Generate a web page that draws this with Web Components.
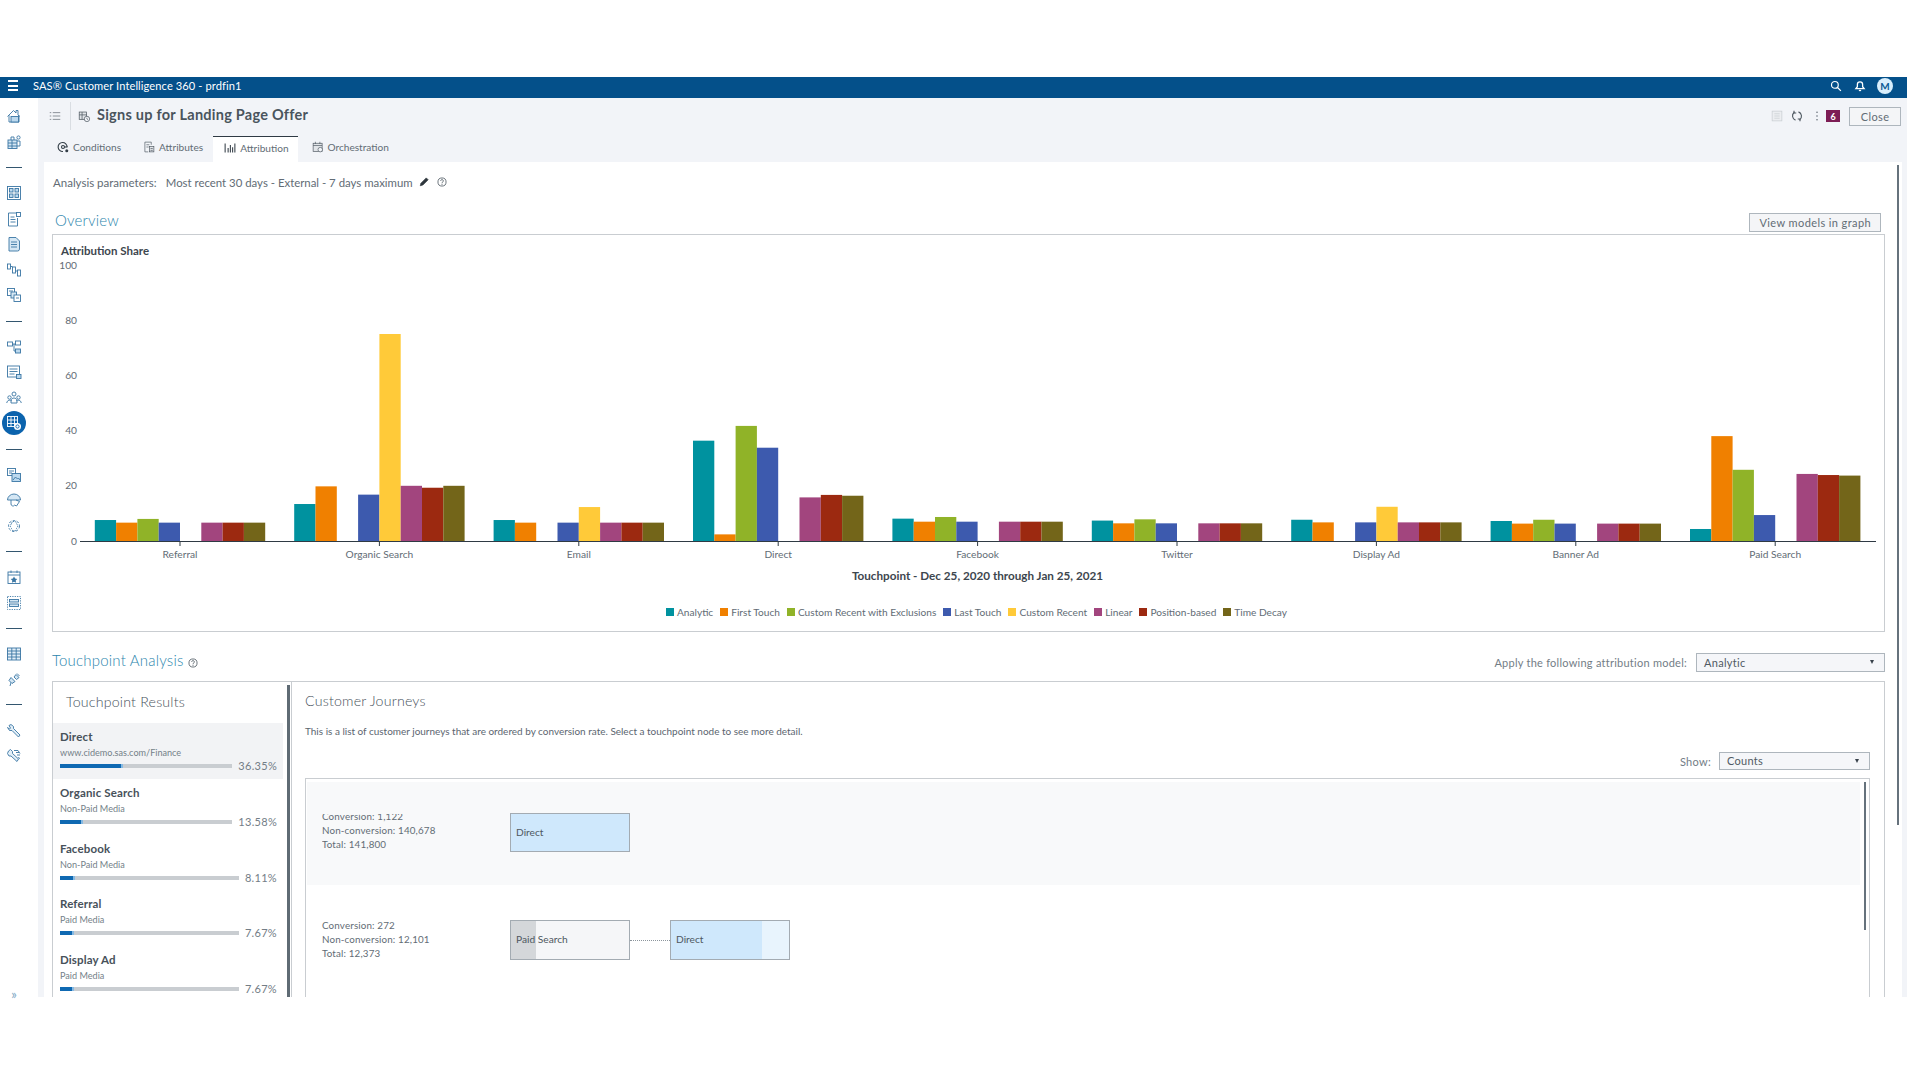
<!DOCTYPE html>
<html lang="en">
<head>
<meta charset="UTF-8">
<title>Signs up for Landing Page Offer</title>
<style>
  html, body { margin: 0; padding: 0; background: #fff; }
  body { font-family: Lato, "Open Sans", sans-serif; color: #4b5660; }
</style>
</head>
<body>

<template id="t-app">
  <style>
    :host { display: flex; flex-direction: column; width: 1907px; height: 1073px; overflow: hidden; background: #fff; }
    .top { height: 77px; flex: none; }
    .main { height: 899px; flex: none; display: flex; }
    .work { flex: 1; min-width: 0; display: flex; flex-direction: column; background: #f2f4f8; }
    .content { flex: 1; min-height: 0; margin: 0 5px 0 6px; background: #fff; position: relative; overflow: hidden; display: flex; flex-direction: column; }
    .scroll { position: absolute; left: 1853px; top: 3px; width: 2px; height: 660px; background: #66727c; }
    .params { height: 40px; flex: none; display: flex; align-items: center; padding-left: 9px; font-size: 11.5px; color: #626c75; }
    .params b { font-weight: 400; font-size: 11.4px; margin-left: 9px; }
    .params sas-icon { margin-left: 5px; }
    .params sas-icon + sas-icon { margin-left: 7px; }
    .overview { height: 32px; flex: none; display: flex; justify-content: space-between; align-items: flex-end; padding: 0 21px 2px 11px; box-sizing: border-box; }
    h2 { margin: 0; font-size: 15px; line-height: 20px; font-weight: 300; color: #2c86ad; letter-spacing: .2px; }
    .overview h2 { margin-bottom: 2px; }
    .tphead { height: 49px; flex: none; display: flex; align-items: flex-end; padding: 0 17px 9px 8px; box-sizing: border-box; }
    .tphead h2 { margin-bottom: 2px; }
    .tphead sas-icon { margin: 0 auto 4px 4px; }
    .tphead span { font-size: 11px; color: #737d86; letter-spacing: .25px; margin-right: 9px; line-height: 19px; }
  </style>
  <div class="top"></div>
  <sas-appbar></sas-appbar>
  <div class="main">
    <sas-sidebar></sas-sidebar>
    <div class="work">
      <sas-objheader></sas-objheader>
      <div class="content">
        <div class="scroll"></div>
        <div class="params">Analysis parameters:<b>Most recent 30 days - External - 7 days maximum</b><sas-icon name="pencil" size="12"></sas-icon><sas-icon name="help" size="10"></sas-icon></div>
        <div class="overview"><h2>Overview</h2><sas-button>View models in graph</sas-button></div>
        <sas-chart></sas-chart>
        <div class="tphead"><h2>Touchpoint Analysis</h2><sas-icon name="help" size="10"></sas-icon><span>Apply the following attribution model:</span><sas-select style="width:189px">Analytic</sas-select></div>
        <sas-analysis></sas-analysis>
      </div>
    </div>
  </div>
</template>

<template id="t-appbar">
  <style>
    :host { display: flex; align-items: center; height: 21px; flex: none; background: #04508a; color: #fff; font-size: 11.1px; letter-spacing: .1px; padding-bottom: 4px; box-sizing: border-box; }
    .burger { width: 10px; height: 7px; margin: 0 15px 0 8px; border-top: 2px solid #fff; border-bottom: 2px solid #fff; position: relative; }
    .burger::after { content: ""; position: absolute; left: 0; right: 0; top: 2.5px; height: 2px; background: #fff; }
    .title { flex: 1; }
    sas-icon { margin-right: 12px; }
    sas-icon + sas-icon { margin-right: 9px; }
    .av { width: 16px; height: 16px; border-radius: 50%; background: #d8eefc; color: #0b5a94; font-size: 10px; font-weight: 700; display: flex; align-items: center; justify-content: center; margin: 0 14px 0 2px; }
  </style>
  <div class="burger"></div>
  <div class="title">SAS® Customer Intelligence 360 - prdfin1</div>
  <sas-icon name="search" size="12"></sas-icon>
  <sas-icon name="bell" size="12"></sas-icon>
  <div class="av">M</div>
</template>

<template id="t-sidebar">
  <style>
    :host { display: flex; flex-direction: column; width: 38px; flex: none; background: #fff; padding-top: 5.5px; box-sizing: border-box; }
    .i { height: 25.6px; width: 28px; display: flex; align-items: center; justify-content: center; flex: none; }
    .d { height: 25.6px; width: 28px; display: flex; align-items: center; justify-content: center; flex: none; }
    .d::before { content: ""; width: 16px; height: 1px; background: #33566f; }
    .a { background: #0b63ad; width: 24px; height: 24px; border-radius: 50%; display: flex; align-items: center; justify-content: center; }
    .more { margin-top: auto; font-size: 13px; line-height: 6px; width: 28px; text-align: center; color: #7ea7c4; }
  </style>
  <div id="list" style="display:contents"></div>
  <div class="more">»</div>
</template>

<template id="t-objheader">
  <style>
    :host { display: block; height: 64px; flex: none; }
    .row { height: 36px; display: flex; align-items: center; padding-left: 11px; box-sizing: border-box; margin-bottom: 2px; }
    .sep { width: 1px; height: 28px; background: #d9dde2; margin: 0 7px 0 9px; }
    .name { font-size: 14.5px; font-weight: 700; color: #4a545d; letter-spacing: .25px; margin: 0 0 4px 6px; flex: 1; }
    .row sas-icon { margin-right: 8px; }
    .badge { width: 14px; height: 12px; background: #7d1d55; color: #fff; font-size: 9px; font-weight: 700; display: flex; align-items: center; justify-content: center; margin-right: 9px; }
    .tabs { display: flex; height: 26px; padding-left: 8px; }
    sas-button { margin-right: 6px; }
  </style>
  <div class="row">
    <sas-icon name="lines" size="12" style="margin-right:0"></sas-icon>
    <div class="sep"></div>
    <sas-icon name="task" size="13" style="margin-right:0"></sas-icon>
    <div class="name">Signs up for Landing Page Offer</div>
    <sas-icon name="sheet" size="12"></sas-icon>
    <sas-icon name="sync" size="12"></sas-icon>
    <sas-icon name="kebab" size="12" style="margin-right:3px"></sas-icon>
    <div class="badge">6</div>
    <sas-button style="padding:0 10.5px">Close</sas-button>
  </div>
  <div class="tabs">
    <sas-tab icon="cond">Conditions</sas-tab>
    <sas-tab icon="attr" style="padding-right:10px">Attributes</sas-tab>
    <sas-tab icon="bars" active>Attribution</sas-tab>
    <sas-tab icon="cal" style="margin-left:3px">Orchestration</sas-tab>
  </div>
</template>

<template id="t-tab">
  <style>
    :host { display: flex; align-items: center; padding: 0 11px 4px; gap: 4px; font-size: 10.1px; color: #626c75; box-sizing: border-box; }
    :host([active]) { background: #fff; border-top: 1px solid #2f3a44; padding: 0 9px 4px 11px; }
  </style>
  <span id="ic" style="display:contents"></span><slot></slot>
</template>

<template id="t-button">
  <style>
    :host { display: flex; align-items: center; justify-content: center; height: 19px; padding: 0 9px; border: 1px solid #aeb6bd; background: #f4f5f7; box-sizing: border-box; font-size: 11px; color: #626c75; letter-spacing: .4px; }
  </style>
  <slot></slot>
</template>

<template id="t-select">
  <style>
    :host { display: flex; align-items: center; justify-content: space-between; height: 19px; padding: 0 10px 1px 7px; border: 1px solid #aeb6bd; background: #f5f6f9; box-sizing: border-box; font-size: 11px; color: #505a63; letter-spacing: .3px; }
    i { width: 0; height: 0; border: 2.5px solid transparent; border-top: 4px solid #38424b; border-bottom: 0; }
  </style>
  <slot></slot><i></i>
</template>

<template id="t-chart">
  <style>
    :host { display: block; width: 1833px; height: 398px; flex: none; margin-left: 8px; border: 1px solid #c9cdd1; box-sizing: border-box; overflow: hidden; }
    .head { font-size: 11.5px; line-height: 15px; padding: 8px 0 0 8px; font-weight: 700; color: #3d464e; height: 16px; }
    svg { display: block; font-family: Lato, sans-serif; }
    text { font-size: 10.2px; fill: #626c75; }
    .axis { font-size: 11.7px; line-height: 18px; height: 18px; font-weight: 700; color: #3d464e; text-align: center; }
    .legend { display: flex; gap: 7px; margin: 20px 0 0 613px; font-size: 10.15px; color: #626c75; line-height: 16px; }
    .legend span { display: flex; align-items: center; gap: 3px; white-space: nowrap; }
    .legend i { width: 8px; height: 8px; flex: none; }
  </style>
  <div class="head">Attribution Share</div>
  <svg id="plot" width="1831" height="307" viewBox="0 0 1831 307"></svg>
  <div class="axis" style="width:1849px">Touchpoint - Dec 25, 2020 through Jan 25, 2021</div>
  <div class="legend" id="legend"></div>
</template>

<template id="t-analysis">
  <style>
    :host { flex: 1; min-height: 0; display: flex; width: 1833px; margin-left: 8px; border-top: 1px solid #c9cdd1; box-sizing: border-box; }
    .left { width: 239px; flex: none; border-left: 1px solid #c9cdd1; box-sizing: border-box; position: relative; overflow: hidden; }
    .left::after { content: ""; position: absolute; left: 234px; top: 3px; bottom: 0; width: 3px; background: #5f6b74; }
    h3 { margin: 0; font-size: 14.2px; font-weight: 300; color: #48525b; letter-spacing: .2px; line-height: 20px; }
    .left h3 { padding: 10px 0 0 13px; height: 31px; }
    .right { flex: 1; min-width: 0; display: flex; flex-direction: column; border-left: 1px solid #c9cdd1; border-right: 1px solid #c9cdd1; padding: 9px 14px 0 13px; }
    p { margin: 13px 0 0; font-size: 9.97px; line-height: 14px; color: #5c6670; }
    .show { display: flex; justify-content: flex-end; align-items: center; margin-top: 14px; height: 18px; font-size: 11px; color: #737d86; letter-spacing: .3px; gap: 8px; }
    .list { flex: 1; min-height: 0; margin-top: 8px; padding: 3px 9px 0 1px; border: 1px solid #c9cdd1; border-bottom: 0; overflow: hidden; position: relative; }
    .list::after { content: ""; position: absolute; right: 3px; top: 3px; width: 2px; height: 148px; background: #66727c; }
  </style>
  <div class="left">
    <h3>Touchpoint Results</h3>
    <sas-touchpoint selected name="Direct" sub="www.cidemo.sas.com/Finance" pct="36.35"></sas-touchpoint>
    <sas-touchpoint name="Organic Search" sub="Non-Paid Media" pct="13.58"></sas-touchpoint>
    <sas-touchpoint name="Facebook" sub="Non-Paid Media" pct="8.11"></sas-touchpoint>
    <sas-touchpoint name="Referral" sub="Paid Media" pct="7.67"></sas-touchpoint>
    <sas-touchpoint name="Display Ad" sub="Paid Media" pct="7.67"></sas-touchpoint>
  </div>
  <div class="right">
    <h3>Customer Journeys</h3>
    <p>This is a list of customer journeys that are ordered by conversion rate. Select a touchpoint node to see more detail.</p>
    <div class="show">Show:<sas-select style="width:151px;height:18px">Counts</sas-select></div>
    <div class="list">
      <sas-journey clip conv="1,122" non="140,678" total="141,800" style="height:103px;background:#f8f9fa;--up:7px">
        <sas-node style="--a:#cfe8fc;--b:#cfe8fc;--p:100%;height:39px;margin-bottom:2px">Direct</sas-node>
      </sas-journey>
      <sas-journey conv="272" non="12,101" total="12,373" style="height:110px;--up:2px">
        <sas-node style="--a:#d4d7da;--b:#f5f6f8;--p:21%">Paid Search</sas-node>
        <i style="width:40px;border-top:1px dotted #8c959c"></i>
        <sas-node style="--a:#cfe8fc;--b:#e8f4fd;--p:77%">Direct</sas-node>
      </sas-journey>
    </div>
  </div>
</template>

<template id="t-touchpoint">
  <style>
    :host { display: block; height: 55.75px; width: 230px; padding: 6px 6px 0 7px; box-sizing: border-box; }
    :host([selected]) { background: #f2f3f5; }
    .n { font-size: 11.5px; line-height: 16px; font-weight: 700; color: #47515a; letter-spacing: .15px; }
    .s { font-size: 9.1px; line-height: 14px; margin-top: 1px; color: #747f88; }
    .b { display: flex; align-items: center; height: 14px; margin-top: -1px; gap: 6px; font-size: 11px; color: #737d86; letter-spacing: .3px; }
    .b span { margin-top: -1px; }
    .t { flex: 1; height: 4px; background: #c9cdd1; }
    .f { height: 100%; background: #0f69b2; border-right: 2px solid #86b9e2; box-sizing: border-box; }
  </style>
  <div class="n"></div><div class="s"></div>
  <div class="b"><div class="t"><div class="f"></div></div><span></span></div>
</template>

<template id="t-journey">
  <style>
    :host { display: flex; align-items: center; padding-left: 15px; box-sizing: border-box; }
    .st { width: 188px; flex: none; font-size: 9.8px; line-height: 14px; color: #626c75; letter-spacing: .15px; margin-bottom: var(--up); }
    :host([clip]) .st { clip-path: inset(5px 0 0 0); }
    .nodes { display: flex; align-items: center; }
  </style>
  <div class="st"><div id="c"></div><div id="n"></div><div id="t"></div></div>
  <div class="nodes"><slot></slot></div>
</template>

<template id="t-node">
  <style>
    :host { display: flex; align-items: center; width: 120px; height: 40px; padding: 0 0 2px 5px; border: 1px solid #a3abb2; box-sizing: border-box; font-size: 10.2px; color: #4e5861; background: linear-gradient(to right, var(--a) var(--p), var(--b) var(--p)); }
  </style>
  <slot></slot>
</template>

<script>
  const ICONS = {
    home: '<path d="M1.5 8.5 7.5 2.5 10 5V2.5h2V7l1.5 1.5"/><path d="M3 7v7h10V7"/><rect x="5" y="8.5" width="7.5" height="5.5" fill="#bcd9ee"/>',
    build: '<rect x="2" y="6" width="9" height="8.5" fill="#d5e7f4"/><path d="M2 9h9M2 12h9M6 6v8.5M5 6V3h3v3"/><circle cx="12.5" cy="3.5" r="1.6"/><path d="M11 7h3v5h-3"/>',
    grid: '<rect x="1.5" y="1.5" width="13" height="13"/><rect x="3.5" y="3.5" width="3.5" height="3.5" fill="#bcd9ee"/><rect x="9" y="3.5" width="3.5" height="3.5" fill="#bcd9ee"/><rect x="3.5" y="9" width="3.5" height="3.5" fill="#bcd9ee"/><rect x="9" y="9" width="3.5" height="3.5" fill="#bcd9ee"/>',
    form: '<path d="M10 2H2.5v13h9V7"/><path d="M4.5 6h4M4.5 8.5h5M4.5 11h5"/><rect x="10.5" y="1.5" width="4" height="4"/>',
    doc: '<path d="M3 1.5h7l3.5 3.5v8a2 2 0 0 1-2 2H3z" fill="#d5e7f4"/><path d="M5 6h6M5 8.5h6M5 11h6"/>',
    nodes: '<rect x="1.5" y="2" width="3" height="5"/><rect x="6.5" y="5" width="3" height="6"/><rect x="11.5" y="8" width="3" height="6"/><path d="M4.5 4.5h2M9.5 9h2"/>',
    copies: '<rect x="1.5" y="1.5" width="7" height="7"/><rect x="5" y="5" width="5.5" height="6" fill="#d5e7f4"/><rect x="8" y="8" width="6.5" height="6.5" fill="#fff"/><path d="M3 4h4M10 11h3"/>',
    flow: '<rect x="1.5" y="3" width="5" height="4"/><rect x="9.5" y="2" width="5" height="4"/><rect x="9.5" y="10" width="5" height="4" fill="#bcd9ee"/><path d="M6.5 5h3M8 5v7h1.5"/>',
    list: '<rect x="1.5" y="2" width="12" height="11"/><path d="M3.5 5h8M3.5 7.5h8M3.5 10h5"/><rect x="10.5" y="10.5" width="4.5" height="4" fill="#bcd9ee"/>',
    people: '<circle cx="8" cy="4" r="2"/><circle cx="3.5" cy="7.5" r="1.7"/><circle cx="12.5" cy="7.5" r="1.7"/><path d="M5 11c0-4 6-4 6 0M.8 13c0-3 4-3.5 5-2M15.2 13c0-3-4-3.5-5-2M5 11v2h6v-2"/>',
    active: '<g stroke="#fff"><rect x="1.5" y="1.5" width="10" height="10" fill="#0b63ad"/><path d="M1.5 5h10M1.5 8.5h10M5 1.5v10M8.5 1.5v10"/></g><circle cx="11.5" cy="11.5" r="3.5" fill="#fff" stroke="none"/><circle cx="11.5" cy="11.5" r="1.6" stroke="#0b63ad"/>',
    image: '<rect x="1.5" y="1.5" width="8" height="7"/><path d="M3 4h5M3 6h3"/><rect x="6" y="6.5" width="8.5" height="8" fill="#bcd9ee"/><path d="M7 13l2.5-3 2 2 1-1 1.5 2"/>',
    dome: '<path d="M1.5 8a6.5 6 0 0 1 13 0z" fill="#d5e7f4"/><path d="M5 8v4a2 2 0 0 0 3.5 1.3M10 8l3.5 1.5-3 4.5-2-1"/>',
    ring: '<circle cx="8" cy="8" r="5.5" stroke-dasharray="2.5 1.5"/><path d="M5.5 5.5l1-2h3l1 2 1.500 2.500-1.500 2.500-1 2h-3l-1-2L4 8z" stroke-dasharray="1.500 1"/>',
    calstar: '<rect x="2" y="3" width="12" height="11.5"/><path d="M2 6h12M5 1.5V4M11 1.5V4"/><path d="M8 7.5l1.1 2.1 2.2.3-1.6 1.6.4 2.2L8 12.7l-2.1 1 .4-2.2-1.6-1.6 2.2-.3z" fill="#3a76a4" stroke="none"/>',
    dotlist: '<rect x="1.5" y="1.5" width="13" height="13" stroke-dasharray="1.2 1.2"/><rect x="3.5" y="4.5" width="9" height="2.5" fill="#d5e7f4"/><rect x="3.5" y="9" width="9" height="2.5" fill="#d5e7f4"/>',
    table: '<rect x="1.5" y="2" width="13" height="12" fill="#e3eff8"/><path d="M1.5 5h13M1.5 8h13M1.5 11h13M5.8 2v12M10.2 2v12"/>',
    pin: '<path d="M4 15l1.500-5"/><path d="M3 9.500l2-3 4 4-3 2zM8 6l2-2.500 3 3L10.500 8.500z" fill="#d5e7f4"/><path d="M11 2.500l2.500 2.500"/>',
    wrench: '<path d="M3 2.500l2-1 2.500 2v2l6.500 6.500-1.500 2-6.500-6.500H3.500L1.500 4.500l2 1.500 1-1z" fill="#e3eff8"/>',
    hand: '<path d="M2.500 3l2-1.500 2 2v2l6 5.500-1.500 2.500-6-5.500H3L1.500 5.500z" fill="#e3eff8"/><path d="M8 2.500h4l2 3M10 4.500h3M11 7h3M12 9.500l2 1"/>',
    search: '<g stroke="#fff" stroke-width="1.600"><circle cx="6.500" cy="6.500" r="4.500"/><path d="M10 10l4.500 4.500"/></g>',
    bell: '<g stroke="#fff" stroke-width="1.700"><path d="M8 2.500a3.500 3.500 0 0 0-3.500 3.500v3L2.500 11.500h11L11.500 9V6A3.500 3.500 0 0 0 8 2.500z"/><path d="M6.500 14h3"/></g>',
    pencil: '<path d="M3 13l1-3.500L11 2.500l2.500 2.500-7 7z" fill="#2d353c" stroke="#2d353c"/>',
    help: '<g stroke="#59636c"><circle cx="8" cy="8" r="6.500" stroke-width="1.400"/><path d="M5.800 6.200a2.200 2 0 1 1 3.300 1.800c-.8.500-1.100.9-1.100 1.900M8 11v1.500" stroke-width="1.500"/></g>',
    lines: '<g stroke="#59636c"><path d="M5 3.500h10M5 8h10M5 12.500h10M1 3.500h2M1 8h2M1 12.500h2"/></g>',
    task: '<g stroke="#4e5861"><rect x="1.500" y="2.500" width="9" height="9" fill="#e1e4e8"/><path d="M1.500 6h9M5 2.500v9"/><circle cx="11" cy="11" r="3.300" fill="#f2f4f8"/><path d="M11 9.500V11l1 1"/></g>',
    sheet: '<g stroke="#c6cbd0"><rect x="1.500" y="1.500" width="13" height="13" fill="#eceef1"/><path d="M4.500 5h7M4.500 8h7M4.500 11h7"/></g>',
    sync: '<g stroke="#4e5861" stroke-width="1.500"><path d="M10 2.500a6 6 0 0 1 1.500 10.500M6 13.500A6 6 0 0 1 4.500 3"/><path d="M4 1v3h3M12 15v-3H9"/></g>',
    kebab: '<g fill="#59636c" stroke="none"><circle cx="8" cy="3" r="1"/><circle cx="8" cy="8" r="1"/><circle cx="8" cy="13" r="1"/></g>',
    cond: '<g stroke="#333d46" stroke-width="1.500"><path d="M13.500 8A6 6 0 1 0 8 14"/><circle cx="8" cy="8" r="2"/><path d="M10 8h4"/></g><circle cx="13" cy="13" r="2" fill="#333d46" stroke="none"/>',
    attr: '<g stroke="#4e5861"><path d="M11 5V1.500H2.500v13H7"/><path d="M4.500 5h4M4.500 8h3"/><rect x="8.500" y="7.500" width="6" height="7" fill="#e1e4e8"/><path d="M10 10h3M10 12.500h3"/></g>',
    bars: '<g stroke="#333d46" stroke-width="1.400"><path d="M1.500 2v12M14.500 2v12M5.500 8v6M8.500 4v10M11.500 7v7"/></g>',
    cal: '<g stroke="#4e5861"><rect x="1.500" y="3" width="12" height="11" fill="#e1e4e8"/><path d="M1.500 6h12M4.500 1v3M10.500 1v3"/><circle cx="11" cy="11.500" r="3" fill="#f2f4f8"/></g>'
  };

  class SasBase extends HTMLElement {
    constructor() {
      super();
      this.attachShadow({mode: 'open'});
      const template = document.getElementById(this.constructor.tpl);
      this.shadowRoot.appendChild(template.content.cloneNode(true));
    }
  }

  class SasApp extends SasBase { static tpl = 't-app'; }
  class SasAppbar extends SasBase { static tpl = 't-appbar'; }
  class SasObjheader extends SasBase { static tpl = 't-objheader'; }
  class SasButton extends SasBase { static tpl = 't-button'; }
  class SasSelect extends SasBase { static tpl = 't-select'; }
  class SasNode extends SasBase { static tpl = 't-node'; }
  class SasAnalysis extends SasBase { static tpl = 't-analysis'; }

  class SasIcon extends HTMLElement {
    connectedCallback() {
      if (this.shadowRoot) return;
      this.attachShadow({mode: 'open'});
      const s = this.getAttribute('size') || 16;
      this.shadowRoot.innerHTML = '<style>:host{display:inline-flex;flex:none}svg{display:block}</style>' +
        `<svg width="${s}" height="${s}" viewBox="0 0 16 16" fill="none" stroke="#3a76a4" stroke-width=".9">${ICONS[this.getAttribute('name')] || ''}</svg>`;
    }
  }

  class SasTab extends SasBase {
    static tpl = 't-tab';
    connectedCallback() {
      // icon name comes from the host, so the icon is only made here
      this.shadowRoot.getElementById('ic').innerHTML = `<sas-icon size="12" name="${this.getAttribute('icon')}"></sas-icon>`;
    }
  }

  class SasSidebar extends SasBase {
    static tpl = 't-sidebar';
    connectedCallback() {
      const items = ['home','build','-','grid','form','doc','nodes','copies','-','flow','list','people','*active','-','image','dome','ring','-','calstar','dotlist','-','table','pin','-','wrench','hand'];
      this.shadowRoot.getElementById('list').innerHTML = items.map(n => {
        if (n === '-') return '<div class="d"></div>';
        if (n[0] === '*') return `<div class="i"><div class="a"><sas-icon name="${n.slice(1)}" size="16"></sas-icon></div></div>`;
        return `<div class="i"><sas-icon name="${n}" size="16"></sas-icon></div>`;
      }).join('');
    }
  }

  class SasChart extends SasBase {
    static tpl = 't-chart';
    connectedCallback() {
      const series = [['Analytic','#00929f'],['First Touch','#f08000'],['Custom Recent with Exclusions','#90b328'],['Last Touch','#3d5aae'],['Custom Recent','#ffca39'],['Linear','#a2457e'],['Position-based','#9c2910'],['Time Decay','#736519']];
      const groups = [
        ['Referral',[7.6,6.65,8,6.65,0,6.65,6.65,6.65]],
        ['Organic Search',[13.4,19.8,0,16.8,75,20,19.3,20]],
        ['Email',[7.6,6.65,0,6.65,12.3,6.65,6.65,6.65]],
        ['Direct',[36.35,2.4,41.7,33.8,0,15.8,16.7,16.4]],
        ['Facebook',[8.1,7,8.7,7,0,7,7,7]],
        ['Twitter',[7.4,6.4,7.85,6.4,0,6.4,6.4,6.4]],
        ['Display Ad',[7.7,6.75,0,6.75,12.4,6.75,6.75,6.75]],
        ['Banner Ad',[7.25,6.3,7.7,6.3,0,6.3,6.3,6.3]],
        ['Paid Search',[4.35,38,25.8,9.4,0,24.3,23.9,23.7]]
      ];
      const y0 = 282, unit = 2.76, ox = 53;
      let s = '';
      for (const v of [0,20,40,60,80,100]) {
        s += `<text x="${77 - ox}" y="${y0 - v * unit + 3.500}" text-anchor="end">${v}</text>`;
      }
      groups.forEach(([name, vals], g) => {
        const cx = 180 + g * 199.400 - ox;
        vals.forEach((v, i) => {
          if (v) s += `<rect x="${cx - 85.200 + i * 21.300}" y="${y0 - v * unit}" width="21.300" height="${v * unit}" fill="${series[i][1]}"/>`;
        });
        s += `<path d="M${cx} ${y0}v5" stroke="#2f3a44"/>`;
        s += `<text x="${cx}" y="${y0 + 17}" text-anchor="middle">${name}</text>`;
      });
      s += `<path d="M${80 - ox} ${y0 + .500}H${1876 - ox}" stroke="#2f3a44"/>`;
      this.shadowRoot.getElementById('plot').innerHTML = s;
      this.shadowRoot.getElementById('legend').innerHTML = series.map(([n, c]) => `<span><i style="background:${c}"></i>${n}</span>`).join('');
    }
  }

  class SasTouchpoint extends SasBase {
    static tpl = 't-touchpoint';
    connectedCallback() {
      const r = this.shadowRoot, pct = this.getAttribute('pct');
      r.querySelector('.n').textContent = this.getAttribute('name');
      r.querySelector('.s').textContent = this.getAttribute('sub');
      r.querySelector('.f').style.width = pct + '%';
      r.querySelector('span').textContent = pct + '%';
    }
  }

  class SasJourney extends SasBase {
    static tpl = 't-journey';
    connectedCallback() {
      const r = this.shadowRoot;
      r.getElementById('c').textContent = 'Conversion: ' + this.getAttribute('conv');
      r.getElementById('n').textContent = 'Non-conversion: ' + this.getAttribute('non');
      r.getElementById('t').textContent = 'Total: ' + this.getAttribute('total');
    }
  }

  customElements.define('sas-icon', SasIcon);
  customElements.define('sas-button', SasButton);
  customElements.define('sas-select', SasSelect);
  customElements.define('sas-tab', SasTab);
  customElements.define('sas-node', SasNode);
  customElements.define('sas-journey', SasJourney);
  customElements.define('sas-touchpoint', SasTouchpoint);
  customElements.define('sas-chart', SasChart);
  customElements.define('sas-analysis', SasAnalysis);
  customElements.define('sas-appbar', SasAppbar);
  customElements.define('sas-sidebar', SasSidebar);
  customElements.define('sas-objheader', SasObjheader);
  customElements.define('sas-app', SasApp);
</script>

<sas-app></sas-app>

</body>
</html>
